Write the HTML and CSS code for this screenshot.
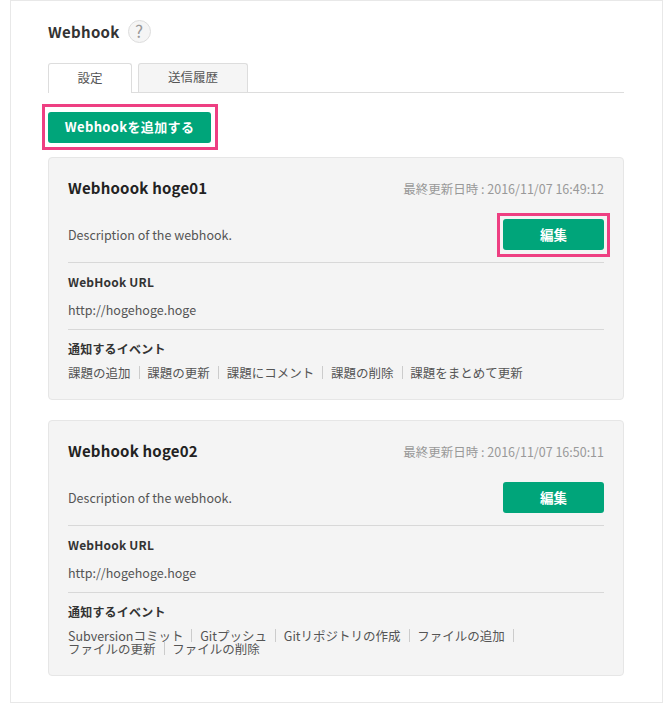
FILE: index.html
```html
<!DOCTYPE html>
<html lang="ja">
<head>
    <meta charset="UTF-8">
    <title>Webhook</title>
    <link rel="stylesheet" href="styles.css">
</head>
<body>
    <main class="panel">
        <div class="title-row">
            <h1>Webhook</h1>
            <span class="help">?</span>
        </div>
        <ul class="tabs">
            <li class="tab active">設定</li>
            <li class="tab">送信履歴</li>
        </ul>
        <div class="add-row">
            <a class="btn btn-add">Webhookを追加する<span class="mark mark-add"></span></a>
        </div>
        <section class="card">
            <div class="card-head">
                <h2>Webhoook hoge01</h2>
                <span class="updated">最終更新日時 : 2016/11/07 16:49:12</span>
            </div>
            <div class="desc-row">
                <p>Description of the webhook.</p>
                <a class="btn btn-edit">編集<span class="mark mark-edit"></span></a>
            </div>
            <div class="url-block">
                <h3>WebHook URL</h3>
                <p>http://hogehoge.hoge</p>
            </div>
            <div class="event-block">
                <h3>通知するイベント</h3>
                <ul class="events">
                    <li>課題の追加</li>
                    <li>課題の更新</li>
                    <li>課題にコメント</li>
                    <li>課題の削除</li>
                    <li>課題をまとめて更新</li>
                </ul>
            </div>
        </section>
        <section class="card">
            <div class="card-head">
                <h2>Webhook hoge02</h2>
                <span class="updated">最終更新日時 : 2016/11/07 16:50:11</span>
            </div>
            <div class="desc-row">
                <p>Description of the webhook.</p>
                <a class="btn btn-edit">編集</a>
            </div>
            <div class="url-block">
                <h3>WebHook URL</h3>
                <p>http://hogehoge.hoge</p>
            </div>
            <div class="event-block">
                <h3>通知するイベント</h3>
                <ul class="events">
                    <li>Subversionコミット</li>
                    <li>Gitプッシュ</li>
                    <li>Gitリポジトリの作成</li>
                    <li>ファイルの追加</li>
                    <li>ファイルの更新</li>
                    <li>ファイルの削除</li>
                </ul>
            </div>
        </section>
    </main>
</body>
</html>
```
FILE: styles.css
```css
* {
    margin: 0;
    padding: 0;
    box-sizing: border-box;
}
body {
    font-family: "Noto Sans CJK JP", "Noto Sans", sans-serif;
    background-color: #fff;
    color: #333;
    font-size: 13px;
    padding-left: 10px;
    width: 663px;
    height: 703px;
    overflow: hidden;
}
.panel {
    width: 653px;
    height: 703px;
    border: 1px solid #e8e8e8;
    padding: 19px 38px 0 37px;
}
.title-row {
    display: flex;
    align-items: center;
    height: 23px;
}
.title-row h1 {
    font-size: 15px;
    font-weight: 700;
    letter-spacing: 0.3px;
    line-height: 22px;
}
.help {
    width: 23px;
    height: 23px;
    margin-left: 8px;
    border: 1px solid #ddd;
    border-radius: 50%;
    background-color: #f5f5f5;
    color: #999;
    font-size: 17px;
    line-height: 20px;
    text-align: center;
}
.tabs {
    list-style: none;
    display: flex;
    gap: 6px;
    height: 30px;
    margin-top: 20px;
    border-bottom: 1px solid #ddd;
}
.tab {
    height: 29px;
    padding: 0 29px;
    border: 1px solid #ddd;
    border-bottom: 0;
    border-radius: 3px 3px 0 0;
    background-color: #f5f5f5;
    font-size: 12.5px;
    line-height: 26px;
    color: #555;
}
.tab.active {
    width: 84px;
    height: 30px;
    padding: 1px 0 0;
    text-align: center;
    background-color: #fff;
}
.add-row {
    display: flex;
    margin-top: 19px;
}
.btn {
    position: relative;
    display: block;
    height: 31px;
    border-radius: 3px;
    background-color: #00a57a;
    color: #fff;
    font-weight: 700;
    line-height: 30px;
    text-align: center;
}
.btn-add {
    width: 163px;
    letter-spacing: 0.35px;
}
.btn-edit {
    width: 101px;
    font-size: 13.5px;
}
.mark {
    position: absolute;
    border: 3px solid #ee3f82;
}
.mark-add {
    left: -6px;
    top: -8px;
    width: 176px;
    height: 46px;
}
.mark-edit {
    left: -6px;
    top: -6px;
    width: 113px;
    height: 44px;
}
.card {
    margin-top: 14px;
    padding: 0 19px;
    border: 1px solid #e6e6e6;
    border-radius: 4px;
    background-color: #f4f4f4;
}
.card + .card {
    margin-top: 20px;
}
.card-head {
    display: flex;
    justify-content: space-between;
    align-items: center;
    height: 61px;
}
.card-head h2 {
    font-size: 15px;
    font-weight: 700;
    letter-spacing: 0.2px;
    line-height: 20px;
    margin-bottom: 1px;
    color: #222;
}
.updated {
    font-size: 12.5px;
    margin-bottom: 1px;
    color: #999;
}
.desc-row {
    display: flex;
    justify-content: space-between;
    align-items: flex-start;
    height: 44px;
    border-bottom: 1px solid #d8d8d8;
}
.desc-row p {
    font-size: 12.5px;
    line-height: 32px;
    color: #555;
}
.url-block {
    height: 67px;
    border-bottom: 1px solid #d8d8d8;
    padding-top: 9px;
}
h3 {
    font-size: 12px;
    font-weight: 700;
    letter-spacing: 0.2px;
    line-height: 20px;
}
.url-block p {
    margin-top: 8px;
    font-size: 12.5px;
    line-height: 20px;
    color: #555;
}
.event-block {
    padding: 9px 0 20px;
}
.events {
    list-style: none;
    margin-top: 7px;
    font-size: 12.5px;
    line-height: 13px;
    color: #555;
}
.events li {
    display: inline-block;
    margin-right: 5px;
    padding-right: 8px;
    border-right: 1px solid #ccc;
}
.events li:last-child {
    border-right: 0;
}
```
